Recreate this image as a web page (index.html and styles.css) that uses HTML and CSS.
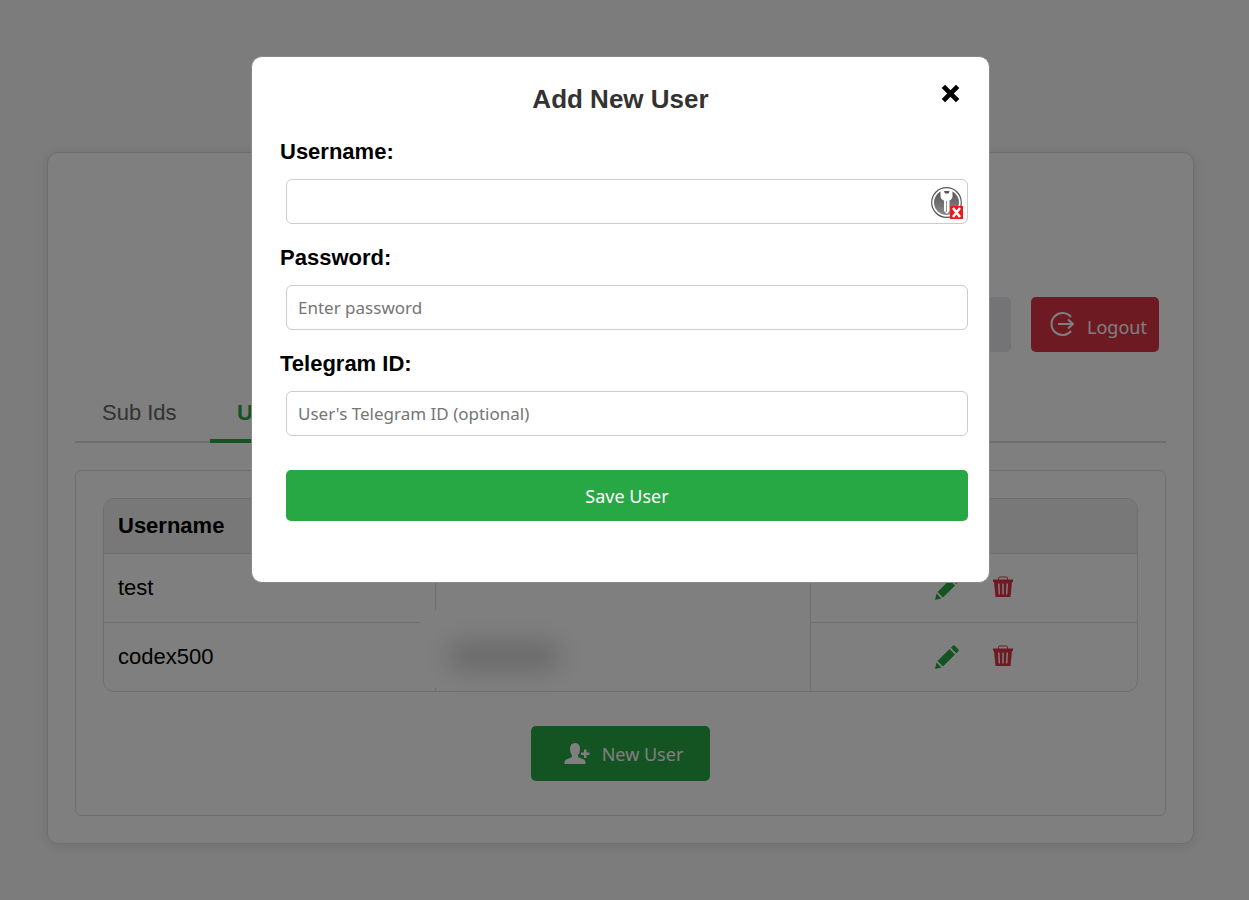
FILE: index.html
```html
<!DOCTYPE html>
<html lang="en">
<head>
<meta charset="UTF-8">
<meta name="viewport" content="width=device-width, initial-scale=1">
<title>Users</title>
<link rel="stylesheet" href="styles.css">
</head>
<body>
<svg class="sprite" aria-hidden="true">
  <symbol id="pencil" viewBox="0 0 24 24">
    <path d="M0 24 1.500 17.500 6.500 22.500Z M2.500 16 14.500 4 20 9.500 8 21.500Z M15.800 2.700 17.800 .7Q18.800 -.2 19.800 .7L23.300 4.200Q24.200 5.200 23.300 6.200L21.300 8.200Z"/>
  </symbol>
  <symbol id="trash" viewBox="0 0 20 22">
    <path fill-rule="evenodd" d="M1 6H19L17.500 21H2.500Z M5 7.500 5.600 18.500H7L6.500 7.500Z M9.300 7.500V18.500H10.700V7.500Z M13.500 7.500 13 18.500H14.400L15 7.500Z"/>
    <path d="M0 3.500H20V6H0Z"/>
    <path d="M5.500 4V2.200Q5.500 1 6.700 1H13.300Q14.500 1 14.500 2.200V4" fill="none" stroke="currentColor"/>
  </symbol>
</svg>

<main class="container">
  <div class="toolbar">
    <button class="btn btn-light" aria-label="Settings"></button>
    <button class="btn btn-danger">
      <svg class="icon-logout" viewBox="0 0 26 26" fill="none" stroke="currentColor" stroke-width="2"><path d="M22 6A11 11 0 1 0 22 20M9 13H24M19 8.500 24 13 19 17.500"/></svg>
      Logout
    </button>
  </div>

  <nav class="tabs">
    <a class="tab" href="#subs">Sub Ids</a>
    <a class="tab active" href="#users">Users</a>
  </nav>

  <section class="panel" id="users">
    <table class="users">
      <thead>
        <tr><th class="col-name">Username</th><th class="col-id"></th><th></th></tr>
      </thead>
      <tbody>
        <tr>
          <td>test</td>
          <td></td>
          <td>
            <div class="actions">
              <button class="edit" aria-label="Edit test"><svg><use href="#pencil"/></svg></button>
              <button class="delete" aria-label="Delete test"><svg><use href="#trash"/></svg></button>
            </div>
          </td>
        </tr>
        <tr>
          <td>codex500</td>
          <td class="masked"><span class="mask"></span></td>
          <td>
            <div class="actions">
              <button class="edit" aria-label="Edit codex500"><svg><use href="#pencil"/></svg></button>
              <button class="delete" aria-label="Delete codex500"><svg><use href="#trash"/></svg></button>
            </div>
          </td>
        </tr>
      </tbody>
    </table>
    <button class="btn btn-success">
      <svg class="icon-user" viewBox="0 0 25 22" fill="currentColor"><path d="M0 21V19.500Q0 16.500 4 15.500Q7.500 14.600 7.500 13.500V12Q5.500 10 5.500 6Q5.500 0 10.500 0Q15.500 0 15.500 6Q15.500 10 13.500 12V13.500Q13.500 14.600 17 15.500Q21 16.500 21 19.500V21Z"/><path d="M16.500 9.500H19.500V6.500H22V9.500H25V12H22V15H19.500V12H16.500Z"/></svg>
      New User
    </button>
  </section>
</main>

<div class="overlay">
  <div class="modal" role="dialog" aria-modal="true" aria-labelledby="modalTitle">
    <button class="close" aria-label="Close">
      <svg viewBox="0 0 20 20" stroke="currentColor" stroke-width="5"><path d="M2.500 2.500 17.500 17.500M17.500 2.500 2.500 17.500"/></svg>
    </button>
    <h2 id="modalTitle">Add New User</h2>
    <form>
      <label for="username">Username:</label>
      <div class="field">
        <input id="username" type="text">
        <svg class="key" viewBox="0 0 33 33">
          <defs>
            <linearGradient id="keyFill" x1="0" y1="0" x2="0" y2="1"><stop offset="0" stop-color="#555"/><stop offset="1" stop-color="#8a8a8a"/></linearGradient>
          </defs>
          <circle cx="15.500" cy="15.500" r="14.800" fill="#fff" stroke="#555" stroke-width="1.200"/>
          <circle cx="15.500" cy="15.500" r="12.500" fill="url(#keyFill)"/>
          <path d="M9.500 4Q15.500 1.500 21.500 4V9Q21.500 12 18.500 13.500V24L16 27 13 24V13.500Q9.500 12 9.500 9Z" fill="#fff"/>
          <path d="M13 4H18.500L17.500 6.500H14Z" fill="#555"/>
          <path d="M15.500 14V25" stroke="#999"/>
          <path d="M19 19H32V32H19Z" fill="#f01818"/>
          <path d="M22 21 29 30M29 21 22 30" stroke="#fff" stroke-width="2.500"/>
        </svg>
      </div>
      <label for="password">Password:</label>
      <div class="field"><input id="password" type="password" placeholder="Enter password"></div>
      <label for="telegram">Telegram ID:</label>
      <div class="field"><input id="telegram" type="text" placeholder="User's Telegram ID (optional)"></div>
      <button class="save" type="submit">Save User</button>
    </form>
  </div>
</div>
</body>
</html>
```
FILE: styles.css
```css
*{box-sizing:border-box;}
body{margin:0;padding:152px 55px 56px 47px;min-height:100vh;background:#f8f8f8;color:#000;font-family:"Liberation Sans",Arial,sans-serif;font-size:22px;line-height:26px;}
button,input{font-family:"Noto Sans",Tahoma,sans-serif;font-size:18px;}
button{cursor:pointer;}
.sprite{display:none;}

.container{padding:144px 27px 27px;background:#fff;border:1px solid #ddd;border-radius:11px;box-shadow:0 2px 11px rgba(0,0,0,0.1);}
.toolbar{display:flex;justify-content:flex-end;gap:20px;padding-right:7px;}
.btn{display:flex;align-items:center;justify-content:center;height:55px;border:none;border-radius:5px;color:#fff;}
.btn-light{width:128px;background:#e9e9ed;}
.btn-danger{width:128px;gap:12px;padding:4px 0 0 6px;background:#dc3545;}
.btn-success{width:179px;gap:12px;margin:34px auto 0;padding:0 0 0 6px;background:#28a745;}
.icon-logout{width:26px;height:26px;margin-bottom:6px;}
.icon-user{width:26px;height:22px;}

.tabs{display:flex;margin:31px 0 27px;border-bottom:2px solid #ddd;}
.tab{padding:17px 27px 13px;margin-bottom:-2px;border-bottom:4px solid transparent;color:#666;text-decoration:none;}
.tab.active{border-color:#28a745;color:#28a745;font-weight:bold;}
.tab:first-child{width:135px;}

.panel{padding:27px 27px 34px;border:1px solid #ddd;border-radius:6px;}
.users{width:100%;table-layout:fixed;border-collapse:separate;border-spacing:0;border:1px solid #ddd;border-radius:11px;overflow:hidden;}
.users th{height:55px;padding:0 14px;background:#f1f1f1;text-align:left;border-bottom:1px solid #ddd;}
.users td{height:69px;padding:0 14px;border-right:1px solid #ddd;border-bottom:1px solid #ddd;}
.users td:last-child{border-right:none;}
.users tr:last-child td{height:68px;border-bottom:none;}
.col-name{width:32.1%;}
.col-id{width:36.3%;}
.actions{display:flex;justify-content:center;gap:34px;}
.actions button{display:flex;padding:0;border:none;background:none;fill:currentColor;}
.actions .edit{color:#28a745;}
.actions .delete{color:#dc3545;}
.actions svg{width:24px;height:24px;}
.actions .delete svg{width:20px;height:22px;}
/* hidden id, covers the cell borders too */
.masked{position:relative;}
.mask{position:absolute;top:-13px;right:0;bottom:3px;left:-16px;display:flex;align-items:center;padding-left:28px;background:#fff;}
.mask::before{content:"";width:112px;height:22px;margin-top:14px;border-radius:11px;background:#c4c4c4;filter:blur(14px);}

.overlay{position:fixed;inset:0;padding:56px 8px 0 0;background:rgba(0,0,0,0.5);}
.modal{position:relative;width:60%;min-width:320px;max-width:739px;margin:0 auto;padding:26px 21px 61px 28px;background:#fff;border:1px solid #888;border-radius:11px;}
.modal h2{margin:0 7px 24px 0;font-size:26px;line-height:32px;text-align:center;color:#333;}
.close{position:absolute;top:27px;right:29px;display:flex;padding:0;border:none;background:none;color:#000;}
.close svg{width:19px;height:19px;}
.modal label{display:block;font-weight:bold;}
.field{position:relative;margin:14px 0 21px 6px;}
.field input{display:block;width:100%;height:45px;padding:0 11px;border:1px solid #ccc;border-radius:6px;background:#fff;font-size:17px;}
.field input::placeholder{color:#757575;}
.key{position:absolute;top:8px;right:4px;width:33px;height:33px;}
.save{display:block;width:calc(100% - 6px);height:51px;margin:34px 0 0 6px;padding:0;border:none;border-radius:5px;background:#28a745;color:#fff;}
```
